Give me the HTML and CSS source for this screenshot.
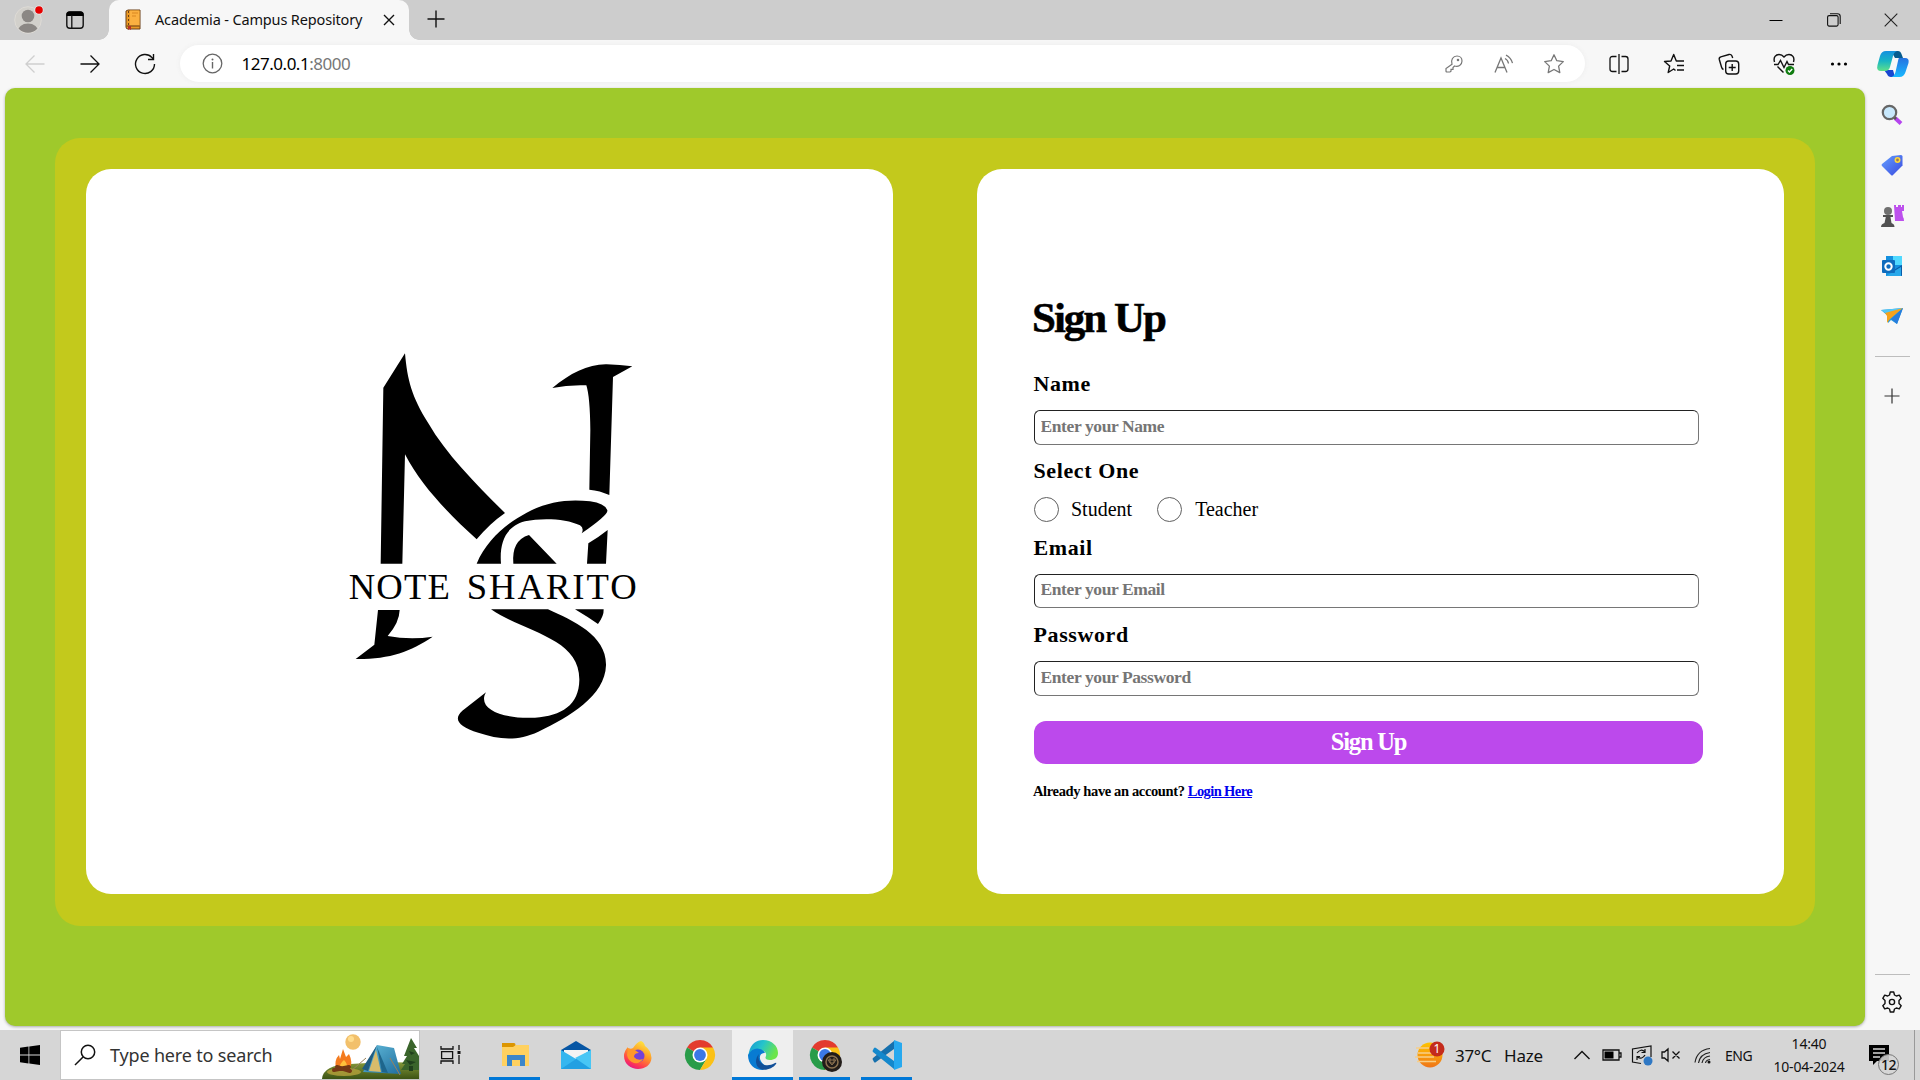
FILE: index.html
```html
<!DOCTYPE html>
<html lang="en">
<head>
<meta charset="utf-8">
<title>Academia - Campus Repository</title>
<link rel="stylesheet" href="styles.css">
</head>
<body>
<div class="browser">
  <header class="tabstrip">
    <div class="profile"><svg width="32" height="32" viewBox="0 0 32 32"><defs><clipPath id="av"><circle cx="16" cy="17" r="12.7"/></clipPath></defs><circle cx="16" cy="17" r="13.3" fill="#d2d0cb" stroke="#dedbd6"/><circle cx="16" cy="13" r="6.3" fill="#8b8784"/><ellipse cx="16" cy="29" rx="10.5" ry="8.5" fill="#8b8784" clip-path="url(#av)"/><circle cx="27" cy="7" r="4.6" fill="#e8e8e8"/><circle cx="27" cy="7" r="3.8" fill="#e60000"/></svg></div>
    <div class="workspaces"><svg width="20" height="20" viewBox="0 0 20 20"><rect x="1.8" y="2" width="16.4" height="16.2" rx="3" fill="none" stroke="#111" stroke-width="1.4"/><path d="M1.5 6V4.5a3 3 0 0 1 3-3h11a3 3 0 0 1 3 3V6z"/><path d="M6.8 5v13" stroke="#111" stroke-width="1.3"/></svg></div>
    <div class="tab">
      <svg class="favicon" width="16" height="22" viewBox="0 0 16 22"><path d="M3 1h12v19H3q-2 0-2-2V2z" fill="#eb9a25" stroke="#6b3f16"/><path d="M5 1.5h9.500v15H5z" fill="#fbb040"/><path d="M1.500 17h13" stroke="#6b3f16"/><path d="M3.500 2v14" stroke="#6b3f16" stroke-dasharray="2 2"/><path d="M7 4h6M7 7h4" stroke="#d98620"/><path d="M3 17h3v4l-1.500-1L3 21z" fill="#b83224"/></svg>
      <span class="tab-title">Academia - Campus Repository</span>
      <svg class="tab-close" width="12" height="12" viewBox="0 0 12 12"><path d="M1 1l10 10M11 1L1 11" stroke="#111" stroke-width="1.4"/></svg>
    </div>
    <div class="new-tab"><svg width="18" height="18" viewBox="0 0 18 18"><path d="M9 .5v17M.5 9h17" stroke="#111" stroke-width="1.4"/></svg></div>
    <div class="window-controls">
      <span><svg width="14" height="14" viewBox="0 0 14 14"><path d="M.5 7.500h13" stroke="#000"/></svg></span>
      <span><svg width="14" height="14" viewBox="0 0 14 14"><rect x=".6" y="2.600" width="10.500" height="10.500" rx="1.500" fill="none" stroke="#111" stroke-width="1.100"/><path d="M3 .7h7.500q2.700 0 2.700 2.700V11" fill="none" stroke="#111" stroke-width="1.100"/></svg></span>
      <span><svg width="14" height="14" viewBox="0 0 14 14"><path d="M.7.7l12.600 12.600M13.300.7L.7 13.300" stroke="#222" stroke-width="1.100"/></svg></span>
    </div>
  </header>

  <nav class="toolbar">
    <div class="nav-buttons">
      <span><svg width="20" height="20" viewBox="0 0 20 20" fill="none" stroke="#cfcfcf" stroke-width="1.300"><path d="M19.500 10H1M9.500 1.500L1 10l8.500 8.500"/></svg></span>
      <span><svg width="20" height="20" viewBox="0 0 20 20" fill="none" stroke="#111" stroke-width="1.300"><path d="M.5 10H19M10.500 1.500L19 10l-8.500 8.500"/></svg></span>
      <span><svg width="22" height="22" viewBox="0 0 22 22" fill="none" stroke="#111" stroke-width="1.400"><path d="M20.500 11A9.500 9.500 0 1 1 18 4.600L19.500 6.300M19.500 1v5.500H14"/></svg></span>
    </div>
    <div class="address">
      <svg class="info" width="21" height="21" viewBox="0 0 21 21"><circle cx="10.500" cy="10.500" r="9.300" fill="none" stroke="#666" stroke-width="1.300"/><path d="M10.500 9v6.500" stroke="#666" stroke-width="1.400"/><circle cx="10.500" cy="6.500" r="1" fill="#666"/></svg>
      <span class="url">127.0.0.1<span class="port">:8000</span></span>
      <div class="address-actions">
        <span><svg width="18" height="18" viewBox="0 0 18 18" fill="none" stroke="#777" stroke-width="1.200"><path d="M7 9.300C5.500 5 8 1 12 1c3 0 5 2.200 5 5 0 4-3.700 6.300-7.500 5L8 12.500v1.800H6v2L5 17H2q-1 0-1-1v-2.500z"/><circle cx="13" cy="5" r=".7" fill="#777"/></svg></span>
        <span><svg width="20" height="20" viewBox="0 0 20 20" fill="none" stroke="#777" stroke-width="1.300"><path d="M1 18.500L7 4l6 14.500M3.200 13.500h7.600M11 4.500q3 1.500 3.500 5M12 1.200q5 2.500 6.500 8" /></svg></span>
        <span><svg width="22" height="22" viewBox="0 0 22 22" fill="none" stroke="#777" stroke-width="1.300" stroke-linejoin="round"><path d="M11 1.800l2.800 5.900 6.500.9-4.700 4.500 1.200 6.500L11 16.500l-5.800 3.100 1.200-6.500L1.700 8.600l6.500-.9z"/></svg></span>
      </div>
    </div>
    <div class="tools">
      <span><svg width="20" height="20" viewBox="0 0 20 20" fill="none" stroke="#111" stroke-width="1.300"><path d="M7.500 2.500h-4q-2.500 0-2.500 2.500v10q0 2.500 2.500 2.500h4M12.500 2.500h4q2.500 0 2.500 2.500v10q0 2.500-2.500 2.500h-4M10 0v20"/></svg></span>
      <span><svg width="22" height="22" viewBox="0 0 22 22" fill="none" stroke="#111" stroke-width="1.400" stroke-linejoin="round"><path d="M12.500 17.500L10.700 16l-5.500 3.500 1.500-6.500L1.500 8.500 8 8l2.700-6.500L13.300 8H21M14 12.500h7M14 17h7"/></svg></span>
      <span><svg width="22" height="22" viewBox="0 0 22 22" fill="none" stroke="#111" stroke-width="1.400"><rect x="7.700" y="8" width="13" height="13" rx="3"/><path d="M14.200 11v7M10.700 14.500h7M5.500 16.500Q4 16 3.500 14L1.300 6.500q-.5-2 1.500-2.700L11 1.500q2-.5 3 1.500l.7 2"/></svg></span>
      <span><svg width="22" height="22" viewBox="0 0 22 22" fill="none" stroke="#111" stroke-width="1.400"><path d="M1.500 9C0 4 3 1.500 6 1.500q3 0 5 2.500 2-2.500 5-2.500c3 0 6 2.500 4.500 7.500M1 11.500h4l2.500-4 3.500 7 3-6 1.500 3H21M4.500 13.500l6 6"/><circle cx="17" cy="17.500" r="4.500" fill="#107c10" stroke="none"/><path d="M15 17.500l1.500 1.500 2.700-3" stroke="#fff"/></svg></span>
      <span><svg width="18" height="6" viewBox="0 0 18 6"><circle cx="2.500" cy="3" r="1.600"/><circle cx="9" cy="3" r="1.600"/><circle cx="15.500" cy="3" r="1.600"/></svg></span>
    </div>
    <div class="copilot"><svg width="32" height="28" viewBox="0 0 32 28"><defs><linearGradient id="c1" x1="0" y1="0" x2="0" y2="1"><stop offset="0" stop-color="#1490df"/><stop offset=".5" stop-color="#18b5c4"/><stop offset="1" stop-color="#5fe08a"/></linearGradient><linearGradient id="c2" x1="0" y1="0" x2="0" y2="1"><stop offset="0" stop-color="#2672e0"/><stop offset="1" stop-color="#19b9ff"/></linearGradient></defs><path d="M14 1h7q2.500 0 3.500 3l1.500 4h-8z" fill="#075c8f"/><path d="M7 20h9l2 7h-4q-3 0-4-3z" fill="#1747d1"/><path d="M9 1h11q-3 1-4 5l-3 11q-1 4-5 4H4q-5 0-3.500-6L3 6q1.500-5 6-5z" fill="url(#c1)"/><path d="M22 8h6q4.500 0 3.500 5l-3 9q-1.500 5-6 5h-8q3-1 4-5l2.500-11q.500-3 1-3z" fill="url(#c2)"/></svg></div>
  </nav>

  <div class="workspace">
    <main class="page">
      <div class="panel">
        <section class="card logo-card">
          <svg class="logo" width="340" height="410" viewBox="0 0 1020 1230">
            <path d="M255 40C262 120 275 170 325 250C380 345 470 435 555 519Q510 550 470 598C390 525 305 440 255 343L247 671H182L190 143z"/>
            <path d="M697 144C750 100 805 72 860 73Q900 74 937 79L879 111L868 465Q840 452 808 449L811 270Q810 170 799 136Q745 134 697 144z"/>
            <path d="M470 671C500 600 560 550 620 518C680 485 745 476 810 484Q855 490 862 511Q866 524 785 580Q793 564 780 556C740 536 665 533 615 544C555 560 538 610 543 671z"/>
            <path d="M580 671Q574 601 627 585L710 671zM805 610Q838 590 863 570L858 671H801z"/>
            <path d="M174 810H239Q238 848 203 888Q270 900 338 890C270 935 210 958 107 957L163 914z"/>
            <path d="M765 808H851Q852 828 834 852Q802 830 765 808z"/>
            <path d="M513 808H684C760 842 860 887 858 976C855 1068 750 1130 655 1175C590 1205 535 1198 475 1178Q385 1150 427 1112L498 1057C470 1105 545 1138 645 1133C725 1128 777 1095 778 1020C780 893 620 880 513 808z"/>
            <text class="brand" x="86" y="776" textLength="304">NOTE</text>
            <text class="brand" x="440" y="776" textLength="510">SHARITO</text>
          </svg>
        </section>
        <section class="card form-card">
          <form class="signup">
            <h1 class="heading">Sign Up</h1>
            <label class="label">Name</label>
            <input class="field" type="text" placeholder="Enter your Name">
            <label class="label select-label">Select One</label>
            <div class="roles">
              <label class="role"><i class="dot"></i>Student</label>
              <label class="role"><i class="dot"></i>Teacher</label>
            </div>
            <label class="label email-label">Email</label>
            <input class="field email-field" type="text" placeholder="Enter your Email">
            <label class="label password-label">Password</label>
            <input class="field" type="text" placeholder="Enter your Password">
            <button class="submit" type="button">Sign Up</button>
            <p class="account">Already have an account? <a class="login" href="#">Login Here</a></p>
          </form>
        </section>
      </div>
    </main>
    <aside class="sidebar">
      <span><svg width="22" height="22" viewBox="0 0 22 22"><path d="M14 14l6 5.500" stroke="#b544ee" stroke-width="4"/><path d="M12.500 12.500l2.500 2.500" stroke="#555" stroke-width="2.500"/><circle cx="8.500" cy="8.500" r="6.700" fill="#c8e8fc" stroke="#666" stroke-width="2.200"/></svg></span>
      <span><svg width="22" height="22" viewBox="0 0 22 22"><defs><linearGradient id="tg" x1="0" y1="0" x2="1" y2="1"><stop offset="0" stop-color="#65a1ff"/><stop offset="1" stop-color="#3949df"/></linearGradient></defs><path d="M11 2l9-1q1.500 0 1.500 1.500v9L12 21q-1 1-2 0l-9-9q-1-1 0-2z" fill="url(#tg)"/><circle cx="16.500" cy="6" r="2.200" fill="#9a7a62" stroke="#ffd83b" stroke-width="1.600"/></svg></span>
      <span><svg width="24" height="24" viewBox="0 0 24 24"><path d="M14 1h2v2h2V1h3v2h1V1h2v6h-2l1 6q1 1 1 4h-9z" fill="#bd50ed"/><circle cx="8" cy="7" r="4" fill="#707070"/><path d="M3 11h10v2h-2.500l1 6q3 1 3 4H1q0-3 3.500-4l1.300-6H3z" fill="#515151"/></svg></span>
      <span><svg width="22" height="22" viewBox="0 0 22 22"><path d="M5 1h16v20H5z" fill="#1490df"/><path d="M12 1h9v9h-9z" fill="#50d9ff"/><path d="M21 10l-8 5 8 6z" fill="#0a5ca8"/><path d="M5 21l15-9v9z" fill="#28a8ea"/><rect x="1" y="5" width="13" height="13" rx="1" fill="#0f6cbd"/><circle cx="7.500" cy="11.500" r="3.200" fill="none" stroke="#fff" stroke-width="2"/></svg></span>
      <span><svg width="22" height="18" viewBox="0 0 22 18"><path d="M0 3l22-2-6 16-6-4-3 3V9z" fill="#239ddd"/><path d="M0 3l22-2L7 8z" fill="#55c6f5"/><path d="M4 6L22 1 9 12l-3 4V9z" fill="#f5a21b"/><path d="M22 1L10 12l6 5z" fill="#277ddd"/></svg></span>
      <i class="rule"></i>
      <span class="add"><svg width="16" height="16" viewBox="0 0 16 16"><path d="M8 .5v15M.5 8h15" stroke="#333" stroke-width="1.200"/></svg></span>
      <i class="rule bottom"></i>
      <span class="settings"><svg width="22" height="22" viewBox="0 0 22 22" fill="none" stroke="#111" stroke-width="1.400" stroke-linejoin="round"><path d="M9.300 1h3.400l.8 3 1.800 1 3-.9 1.900 3.200-2.200 2.200v3l2.200 2.200-1.900 3.200-3-.9-1.800 1-.8 3H9.300l-.8-3-1.800-1-3 .9-1.900-3.200L4 12.500v-3L1.800 7.300l1.900-3.200 3 .9 1.800-1z"/><circle cx="11" cy="11" r="2.600"/></svg></span>
    </aside>
  </div>
</div>

<footer class="taskbar">
  <div class="start"><svg width="20" height="20" viewBox="0 0 20 20"><path d="M0 2.800l8.500-1.200v8H0zM9.300 1.500L20 0v9.600H9.300zM0 10.400h8.500v8L0 17.200zM9.300 10.400H20V20L9.300 18.500z"/></svg></div>
  <div class="search">
    <svg width="22" height="22" viewBox="0 0 22 22" fill="none" stroke="#111" stroke-width="1.500"><circle cx="14" cy="8" r="6.700"/><path d="M9.300 12.700L1 21"/></svg>
    <span class="search-text">Type here to search</span>
    <svg class="scene" width="97" height="48" viewBox="0 0 97 48"><defs><linearGradient id="hill" x1="0" y1="0" x2="0" y2="1"><stop offset="0" stop-color="#85993a"/><stop offset="1" stop-color="#3c5314"/></linearGradient><linearGradient id="tent" x1="0" y1="0" x2="1" y2="1"><stop offset="0" stop-color="#63bddd"/><stop offset="1" stop-color="#216e9d"/></linearGradient></defs><path d="M0 48Q1 34 28 33q38-3 69-1v16z" fill="url(#hill)"/><ellipse cx="22" cy="41" rx="17" ry="4" fill="#b5a13b" opacity=".8"/><circle cx="31" cy="11" r="7.700" fill="#f2c06b"/><circle cx="29" cy="8" r="3" fill="#ffdc8c"/><g fill="#3a642b"><path d="M89 7l6 10h-3l5 8v14H79l4-6h-3l5-8h-3z"/></g><path d="M87 20l6 2-4 2zM84 29l10 2-6 3zM87 35h4v5h-4z" fill="#203f1c"/><path d="M55 14l17 3 7 26-38-2z" fill="url(#tent)"/><path d="M55 14L40 38l6 2z" fill="#205c80"/><path d="M54 19l-7 21 12 1z" fill="#d8bc6b"/><path d="M55 16l5 25 6 1z" fill="#1e668c"/><path d="M44 27L29 40M68 27l10 17" stroke="#99825c"/><path d="M14 37q-2-8 3-13l1 4 3-10 3 8 3-3q4 8 1 15z" fill="#f47b1e"/><path d="M17 38q1-6 5-9 4 4 3 9z" fill="#ffc13b"/><path d="M12 39l15-3M15 36l13 4" stroke="#753815" stroke-width="4" stroke-linecap="round"/></svg>
  </div>
  <div class="taskview"><svg width="21" height="20" viewBox="0 0 21 20" fill="none" stroke="#111" stroke-width="1.300"><path d="M1 1v3h12V1M1 19v-3h12v3M1.600 6.600h11v7h-11zM19 0v5M19 10v9"/><path d="M17.500 6h3v3h-3z" fill="#111" stroke="none"/></svg></div>
  <div class="apps">
    <span class="app open"><svg width="30" height="30" viewBox="0 0 30 30"><path d="M2 3h12q1.500 0 1.500 2v3H2z" fill="#dc9500"/><path d="M2 7h11l3-2h13v21H2z" fill="#ffd160"/><path d="M7 15h18v11h-5v-6h-8v6H7z" fill="#3c86c9"/></svg></span>
    <span class="app"><svg width="32" height="30" viewBox="0 0 32 30"><path d="M1 10L16 1l15 9v6H1z" fill="#0756a4"/><path d="M4 10h24v10H4z" fill="#f4f4f4"/><path d="M1 10l15 9 15-9v19H1z" fill="#35b6ef"/><path d="M31 10L13 21 1 29h30z" fill="#22a0e2"/><path d="M31 10v19L15 18z" fill="#48c6f5"/></svg></span>
    <span class="app"><svg width="30" height="30" viewBox="0 0 30 30"><defs><linearGradient id="ff" x1=".8" y1="0" x2=".3" y2="1"><stop offset="0" stop-color="#fff044"/><stop offset=".45" stop-color="#ff9a26"/><stop offset=".8" stop-color="#ff3b50"/><stop offset="1" stop-color="#e31587"/></linearGradient></defs><path d="M18 1q3 1 4 5 6 4 6.500 12C28 25 22 29 15 29S1 24 1 16q0-5 4-9v3l5-2q4-6 8-7z" fill="url(#ff)"/><circle cx="15" cy="16" r="6.500" fill="#7542d8"/><path d="M5 8l7 2 4 3q-5 0-5 4 3 4 9 2-3 5-9 4-6-2-7-8z" fill="#ff972b"/></svg></span>
    <span class="app"><svg width="30" height="30" viewBox="0 0 30 30"><g id="chrome"><path d="M15 15L2 7.500A15 15 0 0 1 28 7.500z" fill="#e33b2e"/><path d="M15 15L2 7.500A15 15 0 0 0 15 30l6.500-11z" fill="#289c49"/><path d="M15 7.500h13A15 15 0 0 1 15 30l6.500-11z" fill="#fbc116"/><circle cx="15" cy="15" r="7.500" fill="#fff"/><circle cx="15" cy="15" r="5.900" fill="#3b78e7"/></g></svg></span>
    <span class="app active"><svg width="30" height="30" viewBox="0 0 30 30"><defs><linearGradient id="eg" x1="0" y1="0" x2="1" y2=".4"><stop offset="0" stop-color="#1594d1"/><stop offset=".5" stop-color="#25c4cb"/><stop offset="1" stop-color="#6be54b"/></linearGradient></defs><path d="M1 12C3 4 8 0 15 0c9 0 15 6 15 13 0 5-4 7-8 7-5 0-5-2-4-4 1-3-2-6-6-6Q4 9 0 17z" fill="url(#eg)"/><path d="M0 15Q5 7 12 9c4 1 5 4 5 4-6-1-8 8 1 13l-3 4C6 30 0 24 0 15z" fill="#087bd2"/><path d="M11 14c-3 8 6 15 16 9q2-1 1 1C23 31 9 33 8 22q0-5 3-8z" fill="#114f98"/></svg></span>
    <span class="app open"><svg class="chrome-profile" width="32" height="32" viewBox="0 0 32 32"><use href="#chrome"/><circle cx="22" cy="22" r="10" fill="#221c19"/><circle cx="22" cy="22" r="6" fill="none" stroke="#8d7350" stroke-width="1.500"/><path d="M18 20h8l-4 5zM20 18v5h4v-5" fill="none" stroke="#8d7350"/></svg></span>
    <span class="app open"><svg width="30" height="30" viewBox="0 0 30 30"><path d="M22 1v8L4 22q-1 1-2 0l-1-2q-1-1 0-2z" fill="#1670ad"/><path d="M22 29v-8L4 8Q3 7 2 8l-1 2q-1 1 0 2z" fill="#1488cc"/><path d="M22 0l8 3v24l-8 3z" fill="#27a9ef"/></svg></span>
  </div>
  <div class="weather">
    <svg width="30" height="28" viewBox="0 0 30 28"><defs><linearGradient id="sun" x1="0" y1="0" x2="0" y2="1"><stop offset="0" stop-color="#ffc400"/><stop offset="1" stop-color="#ef7418"/></linearGradient></defs><circle cx="15" cy="14" r="12.500" fill="url(#sun)"/><path d="M1 7h13M3 12h15M0 16h19M2 20.500h19" stroke="#f8ce88" stroke-width="1.700"/><circle cx="22" cy="8" r="7.500" fill="#c42b1c"/><text class="badge" x="18.500" y="12.300">1</text></svg>
    <span class="temp">37°C</span><span class="haze">Haze</span>
  </div>
  <div class="tray">
    <svg width="16" height="10" viewBox="0 0 16 10" fill="none" stroke="#111" stroke-width="1.400"><path d="M.5 9L8 1.500 15.500 9"/></svg>
    <svg class="battery" width="20" height="12" viewBox="0 0 20 12"><path d="M1 1h16v10H1zM17 4h2v4h-2" fill="none" stroke="#111" stroke-width="1.300"/><path d="M2.500 2.500h9v7h-9z"/></svg>
    <svg class="sync" width="22" height="22" viewBox="0 0 22 22" fill="none" stroke="#111" stroke-width="1.200"><path d="M10 19.500l-8.500-1.500V5L20 2v11M6 9q4-5 8-1M14 5v3.500h-3.500M14 11q-3 5-7.500 2M6 16v-3.500h3"/><circle cx="17" cy="17" r="4.500" fill="#2f78c4" stroke="none"/></svg>
    <svg class="mute" width="20" height="14" viewBox="0 0 20 14" fill="none" stroke="#111" stroke-width="1.300"><path d="M1 4h2.500L7 1v12L3.500 10H1zM11.500 3.500l7 7M18.500 3.500l-7 7"/></svg>
    <svg class="wifi" width="18" height="17" viewBox="0 0 18 17" fill="none" stroke="#222" stroke-width="1.200"><path d="M1 15.500Q3 3 16 1.500M4.500 16Q6 7 16 5.500M8 16q1-6 8-7M11.500 16q.5-3 4.500-3.500"/><circle cx="15" cy="15" r="1.500" fill="#111" stroke="none"/></svg>
    <span class="lang">ENG</span>
  </div>
  <div class="clock"><span class="time">14:40</span><span class="date">10-04-2024</span></div>
  <div class="notices"><svg width="34" height="32" viewBox="0 0 34 32"><path d="M1 1h20v16H9l-4 4v-4H1z"/><path d="M5 5h12M5 9h12M5 13h7" stroke="#d6d6d6" stroke-width="1.400"/><circle cx="20.500" cy="20.500" r="10" fill="#d6d6d6" fill-opacity=".88" stroke="#777"/><text class="count" x="13" y="25.500">12</text></svg></div>
</footer>
</body>
</html>
```
FILE: styles.css
```css
* { box-sizing: border-box; }
html, body { margin: 0; width: 1920px; height: 1080px; overflow: hidden; }
body { display: flex; flex-direction: column; font-family: "Noto Sans", sans-serif; color: #111; }
svg { display: block; flex: none; overflow: visible; }

.browser { height: 1030px; display: flex; flex-direction: column; background: #f7f7f7; }

.tabstrip { height: 40px; flex: none; display: flex; background: #cdcdcd; }
.profile { width: 57px; height: 38px; padding-right: 1px; display: flex; align-items: center; justify-content: center; }
.workspaces { width: 52px; padding: 10px 0 0 8px; }
.tab { position: relative; width: 300px; height: 40px; display: flex; align-items: center; padding: 0 14px 0 16px; background: #f7f7f7; border-radius: 10px 10px 0 0; }
.tab::before, .tab::after { content: ""; position: absolute; bottom: 0; width: 10px; height: 10px; }
.tab::before { left: -10px; background: radial-gradient(circle at 0 0, #cdcdcd 9.500px, #f7f7f7 10px); }
.tab::after { right: -10px; background: radial-gradient(circle at 100% 0, #cdcdcd 9.500px, #f7f7f7 10px); }
.tab-title { margin-left: 14px; font-size: 14.500px; letter-spacing: -.15px; white-space: nowrap; line-height: 38px; height: 40px; }
.tab-close { margin-left: auto; }
.new-tab { width: 53px; height: 38px; display: flex; align-items: center; justify-content: center; }
.window-controls { display: flex; margin-left: auto; }
.window-controls span { width: 57.500px; height: 39px; display: flex; align-items: center; justify-content: center; }

.toolbar { height: 48px; flex: none; display: flex; align-items: center; padding: 0 0 1px 7px; }
.nav-buttons, .tools, .address-actions { display: flex; }
.nav-buttons span, .tools span { width: 55px; display: flex; align-items: center; justify-content: center; }
.address { width: 1405px; height: 37px; margin: 0 6.500px 0 8px; display: flex; align-items: center; padding: 0 6px 0 22px; border-radius: 19px; background: #fff; box-shadow: 0 0 5px #ececec; }
.url { margin-left: 18.500px; font-size: 17px; letter-spacing: -.480px; line-height: 36px; color: #000; }
.port { color: #777; }
.address-actions { margin-left: auto; }
.address-actions span { width: 50px; display: flex; align-items: center; justify-content: center; }
.copilot { width: 53px; display: flex; justify-content: center; padding-right: 1px; }

.workspace { flex: 1; display: flex; padding: 0 0 4px 5px; }
.page { width: 1860px; height: 938px; padding: 50px; border-radius: 10px; background: #9fc92b; box-shadow: 0 1px 3px #aaa; }
.panel { width: 1760px; height: 788px; display: flex; justify-content: space-between; padding: 31px; border-radius: 25px; background: #c3c91c; }
.card { width: 807px; height: 725px; border-radius: 25px; background: #fff; }
.logo-card { display: flex; align-items: center; justify-content: center; }
.logo { margin: 27px 0 0 1px; }
.brand { font: 110px "Liberation Serif", serif; }
.form-card { padding: 119px 57px 0; font-family: "Liberation Serif", serif; color: #000; }
.signup { display: flex; flex-direction: column; align-items: flex-start; }
.heading { margin: 0 0 0 -2px; height: 83px; font-size: 43px; line-height: 59px; letter-spacing: -2px; -webkit-text-stroke: .5px #000; }
.label { height: 39px; font-size: 22px; line-height: 26px; font-weight: bold; letter-spacing: .600px; margin-left: -.5px; }
.field { width: 665px; height: 35px; margin: 0; padding: 0 6px 3px 5.500px; border: 1px solid #767676; border-top-color: #222; border-left-color: #222; border-radius: 6px; background: #fff; font: bold 17.500px "Liberation Serif", serif; letter-spacing: -.400px; }
.field::placeholder { color: #757575; opacity: 1; }
.select-label { margin-top: 13px; height: 39px; }
.roles { display: flex; gap: 25px; height: 25px; }
.role { display: flex; align-items: center; font-size: 20px; line-height: 25px; }
.dot { width: 25px; height: 25px; margin-right: 12px; border: 1.500px solid #606060; border-radius: 50%; }
.role + .role .dot { margin-right: 13px; }
.email-label { margin-top: 13px; }
.email-field { height: 34px; }
.password-label { margin-top: 14px; }
.submit { width: 669px; height: 43px; margin: 25px 0 0; padding: 0 0 2px; border: 0; border-radius: 12px; background: #bc49ec; color: #fff; font: bold 24.500px "Liberation Serif", serif; letter-spacing: -1.200px; }
.account { margin: 17px 0 0 -1px; font-size: 14.500px; line-height: 20px; font-weight: bold; letter-spacing: -.370px; white-space: nowrap; }
.login { color: #00e; letter-spacing: -.600px; }

.sidebar { width: 55px; display: flex; flex-direction: column; align-items: center; padding: 2px 1px 0 0; }
.sidebar span { height: 50.300px; display: flex; align-items: center; }
.rule { width: 35px; height: 1px; margin-top: 15px; background: #bdbdbd; }
.sidebar .add { margin-top: 13px; }
.rule.bottom { margin-top: auto; }
.sidebar .settings { height: 48px; margin-top: 3px; }

.taskbar { height: 50px; display: flex; background: #d6d6d6; }
.start { width: 60px; display: flex; align-items: center; justify-content: center; }
.search { width: 360px; display: flex; align-items: center; padding-left: 13px; border: 1px solid #c5c5c5; background: #fff; }
.search-text { margin-left: 14px; font-size: 18px; letter-spacing: -.170px; color: #333; white-space: nowrap; }
.scene { margin: 0 0 0 auto; }
.taskview { width: 63px; display: flex; align-items: center; padding-left: 19.500px; }
.apps { display: flex; }
.app { width: 62px; height: 50px; display: flex; align-items: center; justify-content: center; }
.app.open { width: 51px; margin: 0 5px 0 6px; border-bottom: 3px solid #0078d7; padding-top: 3px; }
.app.active { width: 61px; margin-left: 1px; background: #efefef; border-bottom: 3px solid #0078d7; padding-top: 3px; }
.chrome-profile { margin: 2px 0 0 2px; }
.weather { width: 162px; margin-left: 498px; display: flex; align-items: center; white-space: nowrap; }
.temp { width: 49px; margin-left: 10px; font-size: 17px; letter-spacing: -.300px; }
.haze { font-size: 17px; letter-spacing: -.200px; }
.badge { font: 12px "Noto Sans", sans-serif; fill: #fff; }
.tray { width: 193px; display: flex; align-items: center; margin-left: -3px; }
.battery { margin-left: 12px; }
.sync { margin-left: 9px; }
.mute { margin-left: 8px; }
.wifi { margin-left: 13px; }
.lang { margin-left: 13px; font-size: 14px; letter-spacing: -.500px; }
.clock { width: 84px; display: flex; flex-direction: column; align-items: center; }
.clock span { font-size: 14px; line-height: 23px; letter-spacing: -.200px; }
.time { margin-top: 2px; }
.notices { flex: 1; margin-right: 5px; padding: 14px 0 0 17px; border-right: 1px solid #999; }
.count { font: 500 14px "Noto Sans", sans-serif; letter-spacing: -.500px; fill: #111; }
```
